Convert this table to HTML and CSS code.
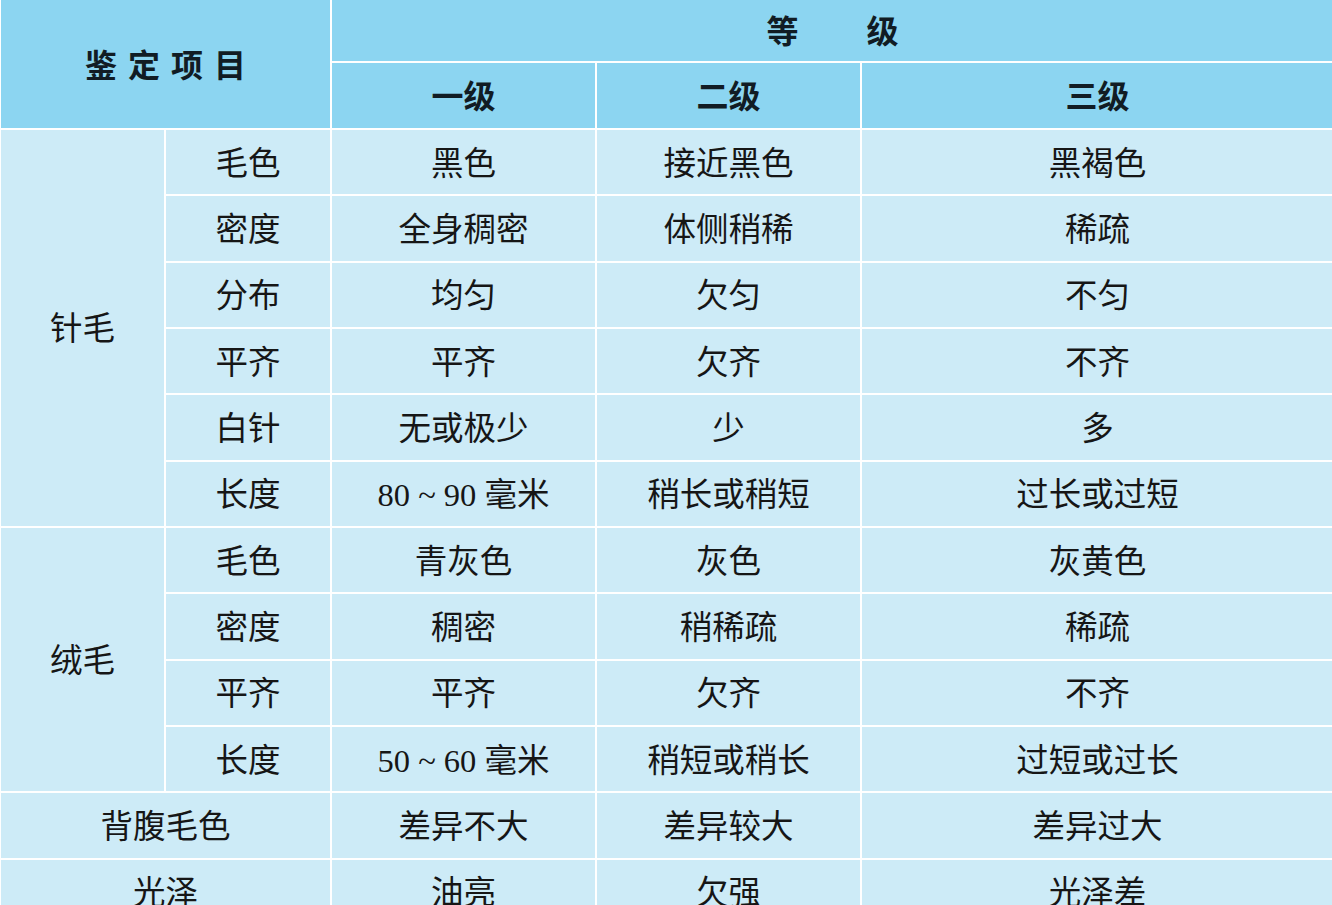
FILE: index.html
```html
<!DOCTYPE html>
<html lang="zh">
<head>
<meta charset="utf-8">
<title>鉴定项目</title>
<link rel="stylesheet" href="styles.css">
</head>
<body>
<table class="grade">
  <colgroup>
    <col class="c1"><col class="c2"><col class="c3"><col class="c4"><col class="c5">
  </colgroup>
  <thead>
    <tr class="h1">
      <th colspan="2" rowspan="2" class="item">鉴定项目</th>
      <th colspan="3" class="level">等<span class="sp"></span>级</th>
    </tr>
    <tr class="h2">
      <th>一级</th><th>二级</th><th>三级</th>
    </tr>
  </thead>
  <tbody>
    <tr><td rowspan="6" class="grp">针毛</td><td>毛色</td><td>黑色</td><td>接近黑色</td><td>黑褐色</td></tr>
    <tr><td>密度</td><td>全身稠密</td><td>体侧稍稀</td><td>稀疏</td></tr>
    <tr><td>分布</td><td>均匀</td><td>欠匀</td><td>不匀</td></tr>
    <tr><td>平齐</td><td>平齐</td><td>欠齐</td><td>不齐</td></tr>
    <tr><td>白针</td><td>无或极少</td><td>少</td><td>多</td></tr>
    <tr><td>长度</td><td>80 ~ 90 毫米</td><td>稍长或稍短</td><td>过长或过短</td></tr>
    <tr><td rowspan="4" class="grp">绒毛</td><td>毛色</td><td>青灰色</td><td>灰色</td><td>灰黄色</td></tr>
    <tr><td>密度</td><td>稠密</td><td>稍稀疏</td><td>稀疏</td></tr>
    <tr><td>平齐</td><td>平齐</td><td>欠齐</td><td>不齐</td></tr>
    <tr><td>长度</td><td>50 ~ 60 毫米</td><td>稍短或稍长</td><td>过短或过长</td></tr>
    <tr><td colspan="2">背腹毛色</td><td>差异不大</td><td>差异较大</td><td>差异过大</td></tr>
    <tr><td colspan="2">光泽</td><td>油亮</td><td>欠强</td><td>光泽差</td></tr>
  </tbody>
</table>
</body>
</html>
```
FILE: styles.css
```css
html, body {
  margin: 0;
  padding: 0;
  background: #cdebf7;
}
body {
  overflow: hidden;
}
.grade {
  width: 1334px;
  margin: 0 0 0 -1px;
  border-collapse: collapse;
  table-layout: fixed;
  font-family: "Liberation Serif", "Noto Sans CJK SC", serif;
}
.c1 { width: 165px; }
.c2 { width: 166px; }
.c3 { width: 265px; }
.c4 { width: 265px; }
.c5 { width: 473px; }
.grade th, .grade td {
  border: 2px solid #ffffff;
  padding: 0;
  text-align: center;
  vertical-align: middle;
}
.grade thead th {
  background: #8cd5f1;
  font-family: "Noto Sans CJK SC", sans-serif;
  font-weight: 700;
  font-size: 32px;
  color: #111c24;
  border-top: 0;
  padding-bottom: 3px;
}
.h1 th { height: 58px; }
.h2 th { height: 62px; }
.item {
  letter-spacing: 11px;
  text-indent: 11px;
}
.sp {
  display: inline-block;
  width: 68px;
}
.grade tbody td {
  height: 60.33px;
  padding-bottom: 4px;
  background: #cdebf7;
  font-size: 32.5px;
  font-weight: 400;
  color: #161616;
}
```
